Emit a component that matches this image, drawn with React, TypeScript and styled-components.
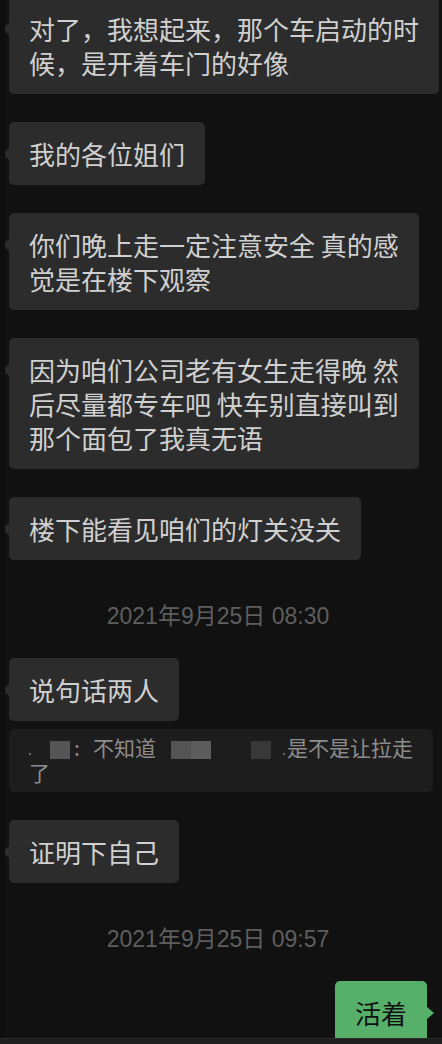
import React from "react";
import styled, { createGlobalStyle } from "styled-components";

const GlobalStyle = createGlobalStyle`
  html, body {
    margin: 0;
    padding: 0;
    background: #111111;
  }
  body {
    font-family: "Noto Sans CJK SC", "Noto Sans", sans-serif;
  }
`;

type Msg =
  | { kind: "in"; lines: string[] }
  | { kind: "out"; lines: string[] }
  | { kind: "time"; text: string }
  | { kind: "quote" };

const messages: Msg[] = [
  { kind: "in", lines: ["对了，我想起来，那个车启动的时", "候，是开着车门的好像"] },
  { kind: "in", lines: ["我的各位姐们"] },
  { kind: "in", lines: ["你们晚上走一定注意安全 真的感", "觉是在楼下观察"] },
  {
    kind: "in",
    lines: ["因为咱们公司老有女生走得晚 然", "后尽量都专车吧 快车别直接叫到", "那个面包了我真无语"],
  },
  { kind: "in", lines: ["楼下能看见咱们的灯关没关"] },
  { kind: "time", text: "2021年9月25日 08:30" },
  { kind: "quote" },
  { kind: "in", lines: ["证明下自己"] },
  { kind: "time", text: "2021年9月25日 09:57" },
  { kind: "out", lines: ["活着"] },
];

function App() {
  return (
    <Screen>
      <GlobalStyle />
      <ChatArea>
        <List>
          {messages.map((m, i) => {
            if (m.kind === "time") {
              return <TimeStamp key={i}>{m.text}</TimeStamp>;
            }
            if (m.kind === "quote") {
              return (
                <Group key={i}>
                  <Row>
                    <Bubble>说句话两人</Bubble>
                  </Row>
                  <Quote>
                    <Speck $ml={0} $mr={19} />
                    <Redact $w={20} $c="#555555" />
                    <Colon>:</Colon>
                    不知道
                    <Redact $w={20} $c="#545454" $ml={15} />
                    <Redact $w={20} $c="#5c5c5c" />
                    <Redact $w={20} $c="#383838" $ml={40} />
                    <Speck $ml={12} $mr={2} />
                    是不是让拉走
                    <br />了
                  </Quote>
                </Group>
              );
            }
            return (
              <Row key={i} $out={m.kind === "out"}>
                <Bubble $out={m.kind === "out"}>
                  {m.lines.map((l, j) => (
                    <React.Fragment key={j}>
                      {j > 0 && <br />}
                      {l}
                    </React.Fragment>
                  ))}
                </Bubble>
              </Row>
            );
          })}
        </List>
      </ChatArea>
      <InputBar />
    </Screen>
  );
}

const Screen = styled.div`
  display: flex;
  flex-direction: column;
  width: 442px;
  height: 1044px;
  overflow: hidden;
  background: #111111;
`;

const ChatArea = styled.div`
  flex: 1;
  overflow: hidden;
  border-left: 5px solid #0e0e0e;
`;

const List = styled.div`
  display: flex;
  flex-direction: column;
  gap: 28px;
  margin-top: -3px;
  padding: 0 15px 0 4px;
`;

const Row = styled.div<{ $out?: boolean }>`
  display: flex;
  justify-content: ${(p) => (p.$out ? "flex-end" : "flex-start")};
`;

const Group = styled.div`
  display: flex;
  flex-direction: column;
  gap: 8px;
`;

const Bubble = styled.div<{ $out?: boolean }>`
  position: relative;
  padding: 15px 20px 14px;
  border-radius: 5px;
  background: ${(p) => (p.$out ? "#57b06a" : "#2c2c2c")};
  color: ${(p) => (p.$out ? "#111111" : "#d0d0d0")};
  font-size: 26px;
  line-height: 34px;
  white-space: nowrap;

  &::before {
    content: "";
    position: absolute;
    top: 26px;
    ${(p) => (p.$out ? "right: -7px;" : "left: -7px;")}
    border-top: 6px solid transparent;
    border-bottom: 6px solid transparent;
    ${(p) =>
      p.$out
        ? "border-left: 7px solid #57b06a;"
        : "border-right: 7px solid #2c2c2c;"}
  }
`;

const Quote = styled.div`
  width: 424px;
  box-sizing: border-box;
  padding: 6px 20px 7px;
  border-radius: 5px;
  background: #1d1d1d;
  color: #8d8d8d;
  font-size: 21px;
  line-height: 25px;
  white-space: nowrap;
`;

const Redact = styled.span<{ $w: number; $c: string; $ml?: number }>`
  display: inline-block;
  vertical-align: -3px;
  width: ${(p) => p.$w}px;
  height: 18px;
  margin-left: ${(p) => p.$ml ?? 0}px;
  background: ${(p) => p.$c};
`;

const Speck = styled.span<{ $ml: number; $mr: number }>`
  display: inline-block;
  width: 2px;
  height: 2px;
  margin: 0 ${(p) => p.$mr}px 0 ${(p) => p.$ml}px;
  vertical-align: 1px;
  background: #6a6a6a;
`;

const Colon = styled.span`
  display: inline-block;
  width: 23px;
  padding-left: 4px;
  box-sizing: border-box;
`;

const TimeStamp = styled.div`
  padding: 16px 0 2px;
  text-align: center;
  color: #5e5e5e;
  font-family: "Liberation Sans", "Noto Sans CJK SC", sans-serif;
  font-size: 23px;
  line-height: 24px;
`;

const InputBar = styled.div`
  height: 5px;
  flex-shrink: 0;
  border-top: 1px solid #2a2a2a;
  background: #1e1e1e;
`;

export default App;
